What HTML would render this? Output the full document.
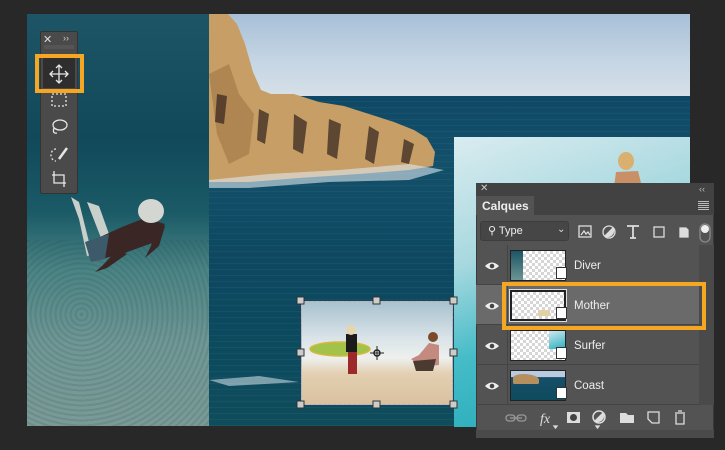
<!DOCTYPE html>
<html><head><meta charset="utf-8"><style>
*{margin:0;padding:0;box-sizing:border-box}
body{width:725px;height:450px;background:#282828;position:relative;overflow:hidden;font-family:"Liberation Sans",sans-serif}
.abs{position:absolute}
.chk{background-color:#fff;background-image:linear-gradient(45deg,#d6d6d6 25%,transparent 25%,transparent 75%,#d6d6d6 75%),linear-gradient(45deg,#d6d6d6 25%,transparent 25%,transparent 75%,#d6d6d6 75%);background-size:6px 6px;background-position:0 0,3px 3px}
.row{position:absolute;left:0;width:223px;height:40px;border-bottom:1px solid #444}
.eye{position:absolute;left:8px;top:15px}
.thumb{position:absolute;left:34px;top:5px;width:56px;height:31px;border:1px solid #222}
.lname{position:absolute;left:98px;top:15px;color:#eee;font-size:11.5px}
.so{position:absolute;left:80px;top:22px;width:11px;height:12px;background:#fff;border:1px solid #333}
</style></head><body>
<!-- diver image -->
<div class="abs" style="left:27px;top:14px;width:182px;height:412px;background:linear-gradient(180deg,#1d5566 0%,#11495a 30%,#1a5a66 48%,#4a8384 62%,#6f9795 80%,#7a9a96 100%)"></div>
<div class="abs" style="left:27px;top:240px;width:182px;height:186px;background:repeating-radial-gradient(circle at 30% 40%,rgba(40,70,70,.15) 0 2px,transparent 2px 5px)"></div>
<svg class="abs" style="left:27px;top:14px" width="182" height="412">
<path d="M44 183 L52 188 L62 228 L70 240 L60 242 L52 205Z" fill="#c9cfcb"/>
<path d="M60 188 L72 192 L82 220 L74 224Z" fill="#c9cfcb"/>
<path d="M62 228 L95 213 L118 204 L138 210 L128 228 L95 240 L70 246Z" fill="#3a2625"/>
<path d="M58 228 L82 220 L78 245 L64 248Z" fill="#3d5a6a"/>
<path d="M90 236 L75 252 L68 258 L80 254 L100 240Z" fill="#3a2625"/>
<ellipse cx="124" cy="197" rx="13" ry="12" fill="#d4d6d2"/>
<path d="M138 212 L132 232 L118 244 L124 232 L128 214Z" fill="#3a2625"/>
</svg>
<!-- coast image -->
<div class="abs" style="left:209px;top:14px;width:481px;height:82px;background:linear-gradient(180deg,#a8c0d8,#c6d6e4 60%,#d6e0e8)"></div>
<div class="abs" style="left:209px;top:96px;width:481px;height:330px;background:linear-gradient(180deg,#0e4866,#13506a 20%,#0d4860 50%,#0c4a5e 80%,#0f4d5c);"></div>
<div class="abs" style="left:209px;top:96px;width:481px;height:330px;background-image:repeating-linear-gradient(0deg,rgba(255,255,255,.04) 0 1px,transparent 1px 6px);"></div>
<svg class="abs" style="left:209px;top:14px" width="481" height="412">
<path d="M0 0 L19 0 L28 10 L36 30 L44 58 L52 76 L62 80 L85 80 L110 88 L135 92 L160 100 L185 108 L205 116 L218 124 L226 138 L224 152 L200 156 L150 160 L90 164 L40 168 L0 168Z" fill="#c79e66"/>
<path d="M0 60 L20 50 L30 80 L45 100 L40 140 L20 150 L8 120Z" fill="#a57a4a" opacity=".7"/>
<path d="M8 80 L18 82 L15 110 L6 108Z M50 95 L60 100 L56 130 L48 126Z M85 100 L98 108 L94 140 L84 135Z M120 105 L132 110 L128 145 L118 140Z M160 112 L170 118 L165 150 L156 145Z M195 125 L205 130 L200 150 L192 148Z" fill="#3b2a22" opacity=".75"/>
<path d="M0 166 L60 160 L130 156 L200 150 L235 156 L200 166 L120 168 L40 174 L0 174Z" fill="#dde8ee" opacity=".6"/>
<path d="M370 193 L460 190 L470 196 L380 198Z M0 366 L50 362 L90 368 L20 372Z" fill="#dbe8ee" opacity=".55"/>
</svg>
<!-- surfer image -->
<div class="abs" style="left:454px;top:137px;width:236px;height:290px;background:linear-gradient(160deg,#d9ecf0 0%,#a7d8df 35%,#45bcc8 60%,#1ba3b3 100%)"></div>
<svg class="abs" style="left:454px;top:137px" width="236" height="60">
<ellipse cx="172" cy="24" rx="8" ry="9" fill="#d9b070"/>
<path d="M162 35 L184 34 L188 50 L160 50Z" fill="#c98f66"/>
</svg>
<!-- mother image -->
<div class="abs" style="left:301px;top:301px;width:152px;height:104px;background:linear-gradient(180deg,#a9c2cf 0%,#d9e3e8 35%,#eef0ee 55%,#e3d0b2 70%,#d9c19f 100%);border:1px solid #c9a6b6"></div>
<svg class="abs" style="left:301px;top:301px" width="152" height="104">
<ellipse cx="39" cy="48" rx="30" ry="7" fill="#a3c24a" stroke="#d8b83a" stroke-width="1.5"/>
<rect x="45" y="33" width="11" height="18" fill="#1b1b1b"/>
<rect x="47" y="51" width="9" height="22" fill="#9c2a2a"/>
<circle cx="50" cy="29" r="5" fill="#e6d6b0"/>
<circle cx="132" cy="36" r="5" fill="#7a4a2a"/>
<path d="M128 42 L138 44 L138 64 L120 66 L110 58 L118 54Z" fill="#c48a80"/>
<path d="M112 60 L135 58 L132 70 L115 70Z" fill="#4b3a30"/>
</svg>
<div class="abs" style="left:301px;top:301px;width:152px;height:104px;border:1px dashed #bbb"></div>
<svg class="abs" style="left:295px;top:295px" width="166" height="116" fill="#ccc" stroke="#333">
<rect x="2" y="2" width="7" height="7"/><rect x="78" y="2" width="7" height="7"/><rect x="155" y="2" width="7" height="7"/>
<rect x="2" y="54" width="7" height="7"/><rect x="155" y="54" width="7" height="7"/>
<rect x="2" y="106" width="7" height="7"/><rect x="78" y="106" width="7" height="7"/><rect x="155" y="106" width="7" height="7"/>
<circle cx="82" cy="58" r="3" fill="none" stroke="#222" stroke-width="1.5"/><path d="M82 51V65M75 58H89" stroke="#222"/>
</svg>
<!-- toolbar -->
<div class="abs" style="left:40px;top:31px;width:38px;height:163px;background:#4a4a4a;border:1px solid #333;border-radius:2px"></div>
<div class="abs" style="left:43px;top:33px;color:#ddd;font-size:11px">✕</div>
<div class="abs" style="left:63px;top:33px;color:#ccc;font-size:9px">››</div>
<div class="abs" style="left:44px;top:45px;width:30px;height:4px;background:#555"></div>
<div class="abs" style="left:43px;top:58px;width:32px;height:30px;background:#2e2e2e"></div>
<div class="abs" style="left:35px;top:54px;width:49px;height:39px;border:4px solid #f5a623"></div>
<svg class="abs" style="left:40px;top:55px" width="38" height="140" fill="none" stroke="#e6e6e6" stroke-width="1.3">
<path d="M19 10V28M10 19H28M16 13L19 10L22 13M16 25L19 28L22 25M13 16L10 19L13 22M25 16L28 19L25 22"/>
<rect x="12" y="39" width="14" height="12" stroke-dasharray="2 2"/>
<ellipse cx="20" cy="70" rx="7" ry="5"/><path d="M14 73 Q12 79 17 78"/>
<path d="M16 94 A5 6 0 1 0 16 106" stroke-dasharray="2 2"/><path d="M19 104 L27 93" stroke-width="2.5"/>
<path d="M14 116V128H26M12 120H24V132"/>
</svg>
<!-- layers panel -->
<div class="abs" style="left:476px;top:183px;width:238px;height:255px;background:#535353;border:1px solid #3a3a3a;border-radius:2px"></div>
<div class="abs" style="left:476px;top:183px;width:238px;height:13px;background:#424242"></div>
<div class="abs" style="left:480px;top:183px;color:#ccc;font-size:10px">✕</div>
<div class="abs" style="left:699px;top:184px;color:#bbb;font-size:9px">‹‹</div>
<div class="abs" style="left:476px;top:196px;width:238px;height:19px;background:#424242"></div>
<div class="abs" style="left:476px;top:196px;width:58px;height:19px;background:#535353"></div>
<div class="abs" style="left:482px;top:199px;color:#eee;font-size:12px;font-weight:bold">Calques</div>
<div class="abs" style="left:698px;top:201px;width:11px;height:9px;background:repeating-linear-gradient(180deg,#bbb 0 1px,transparent 1px 2px)"></div>
<div class="abs" style="left:480px;top:221px;width:89px;height:20px;background:#464646;border:1px solid #3d3d3d;border-radius:3px"></div>
<div class="abs" style="left:488px;top:224px;color:#eee;font-size:11px">⚲ Type</div>
<div class="abs" style="left:557px;top:224px;color:#ddd;font-size:10px">⌄</div>
<svg class="abs" style="left:576px;top:222px" width="140" height="22" fill="none" stroke="#ddd" stroke-width="1.3">
<rect x="3" y="4" width="12" height="11"/><path d="M5 13 L8 9 L10 12 L12 10 L14 13" />
<circle cx="33" cy="10" r="6"/><path d="M29 14 L37 6 A6 6 0 0 1 29 14" fill="#ddd"/>
<path d="M51 4H63M57 4V16M54 16H60" stroke-width="1.8"/>
<rect x="78" y="5" width="10" height="10"/>
<path d="M104 6H110L112 8V15H104Z" fill="#ddd"/>
<rect x="124" y="2" width="10" height="18" rx="5" stroke="#888"/><circle cx="129" cy="7" r="4" fill="#eee" stroke="none"/>
</svg>
<div class="abs" style="left:476px;top:245px;width:223px;height:160px">
 <div class="row" style="top:0">
  <svg class="eye" width="16" height="12"><path d="M1 6 Q8 -1 15 6 Q8 13 1 6Z" fill="#eee"/><circle cx="8" cy="6" r="2.3" fill="#444"/></svg>
  <div class="thumb chk"><div style="width:12px;height:100%;background:linear-gradient(#1d5566,#6c9593)"></div></div>
  <div class="so"></div><div class="lname">Diver</div></div>
 <div class="row" style="top:40px;background:#6a6a6a">
  <svg class="eye" width="16" height="12"><path d="M1 6 Q8 -1 15 6 Q8 13 1 6Z" fill="#eee"/><circle cx="8" cy="6" r="2.3" fill="#444"/></svg>
  <div class="thumb chk" style="border:2px solid #222;outline:1px solid #ddd"><div style="position:absolute;left:26px;top:18px;width:12px;height:6px;background:#e3cfa8"></div></div>
  <div class="so"></div><div class="lname">Mother</div></div>
 <div class="row" style="top:80px">
  <svg class="eye" width="16" height="12"><path d="M1 6 Q8 -1 15 6 Q8 13 1 6Z" fill="#eee"/><circle cx="8" cy="6" r="2.3" fill="#444"/></svg>
  <div class="thumb chk"><div style="position:absolute;right:0;top:0;width:16px;height:18px;background:linear-gradient(160deg,#cfe8ee,#28b0bf)"></div></div>
  <div class="so"></div><div class="lname">Surfer</div></div>
 <div class="row" style="top:120px">
  <svg class="eye" width="16" height="12"><path d="M1 6 Q8 -1 15 6 Q8 13 1 6Z" fill="#eee"/><circle cx="8" cy="6" r="2.3" fill="#444"/></svg>
  <div class="thumb" style="background:linear-gradient(180deg,#b8cbe0 0,#b8cbe0 20%,#154e69 22%,#0f4b5e 100%)"><div style="position:absolute;left:2px;top:3px;width:26px;height:10px;background:#b58f5e;border-radius:40% 60% 10% 10%"></div></div>
  <div class="so"></div><div class="lname">Coast</div></div>
</div>
<div class="abs" style="left:507px;top:245px;width:1px;height:160px;background:#444"></div>
<div class="abs" style="left:699px;top:245px;width:15px;height:160px;background:#4a4a4a"></div>
<div class="abs" style="left:502px;top:282px;width:204px;height:48px;border:4px solid #f5a623"></div>
<svg class="abs" style="left:500px;top:407px" width="200" height="22" fill="none" stroke="#ddd" stroke-width="1.3">
<path d="M10 11H22" stroke="#999"/><rect x="6" y="8" width="9" height="6" rx="3" stroke="#999"/><rect x="17" y="8" width="9" height="6" rx="3" stroke="#999"/>
<text x="40" y="16" fill="#ddd" stroke="none" font-size="14" font-style="italic" font-family="Liberation Serif">fx</text>
<path d="M54 19h3l-1.5 2z" fill="#ddd"/>
<rect x="67" y="5" width="13" height="11" fill="#ddd" stroke="none"/><circle cx="73.5" cy="10.5" r="3.5" fill="#444" stroke="none"/>
<circle cx="99" cy="10" r="6" stroke-width="1.5"/><path d="M95 14 L103 6 A6 6 0 0 1 95 14" fill="#ddd"/><path d="M96 19h3l-1.5 2z" fill="#ddd"/>
<path d="M120 6H126L128 8H134V16H120Z" fill="#ddd" stroke="none"/>
<path d="M148 5H159V16H152L148 12Z"/>
<path d="M175 6H185M178 4H182M176 7V17H184V7"/>
</svg>
<div class="abs" style="left:476px;top:430px;width:238px;height:8px;background:#4a4a4a"></div>
</body></html>
